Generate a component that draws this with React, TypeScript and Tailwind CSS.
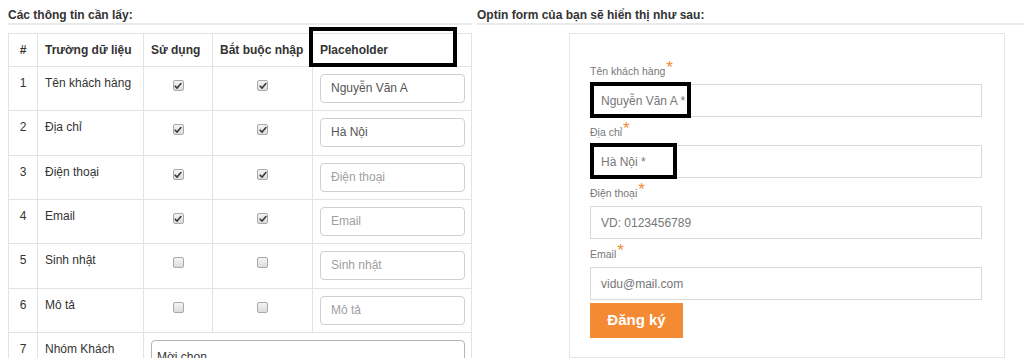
import type { ReactNode } from 'react'

type Field = {
  no: number
  name: string
  used: boolean
  required: boolean
  value?: string
  placeholder: string
  rowH: string
}

const fields: Field[] = [
  { no: 1, name: 'Tên khách hàng', used: true, required: true, value: 'Nguyễn Văn A', placeholder: '', rowH: 'h-[44px]' },
  { no: 2, name: 'Địa chỉ', used: true, required: true, value: 'Hà Nội', placeholder: '', rowH: 'h-[45px]' },
  { no: 3, name: 'Điện thoại', used: true, required: true, placeholder: 'Điện thoại', rowH: 'h-[44px]' },
  { no: 4, name: 'Email', used: true, required: true, placeholder: 'Email', rowH: 'h-[44px]' },
  { no: 5, name: 'Sinh nhật', used: false, required: false, placeholder: 'Sinh nhật', rowH: 'h-[45px]' },
  { no: 6, name: 'Mô tả', used: false, required: false, placeholder: 'Mô tả', rowH: 'h-[44px]' },
]

function Check({ on }: { on: boolean }) {
  return (
    <span className="mt-[5px] flex h-[11px] w-[11px] items-center justify-center rounded-[2px] border border-[#a9a9a9] bg-gradient-to-b from-[#f4f4f4] to-[#dcdcdc]">
      {on && (
        <svg width="8" height="8" viewBox="0 0 8 8">
          <path d="M1.2 4.2 L3.1 6.1 L6.9 1.6" fill="none" stroke="#3a3a3a" strokeWidth="1.6" strokeLinecap="round" strokeLinejoin="round" />
        </svg>
      )}
    </span>
  )
}

function Cell({ w, children, className = '' }: { w: string; children?: ReactNode; className?: string }) {
  return <div className={`${w} shrink-0 border-r border-b border-[#e3e3e3] px-[7px] pt-[8px] ${className}`}>{children}</div>
}

function Label({ text }: { text: string }) {
  return (
    <div className="mb-[6px] flex h-[14px] items-center text-[10.5px] leading-[14px] text-[#777]">
      {text}
      <span className="-mt-[8px] ml-[1px] text-[17px] leading-none text-[#f58a34]">*</span>
    </div>
  )
}

function FormInput({ text, boxW }: { text: string; boxW?: string }) {
  return (
    <div className="relative mb-[8px] flex h-[33px] w-[392px] items-center border border-[#d9d9d9] bg-white pl-[10px] text-[12px] text-[#777]">
      {text}
      {boxW && <div className={`absolute -left-[1px] -top-[3px] h-[36px] ${boxW} border-[4px] border-black`} />}
    </div>
  )
}

export default function App() {
  return (
    <div className="flex h-[358px] w-[1024px] overflow-hidden bg-white pt-[7px] font-['Liberation_Sans',Arial,sans-serif] text-[#333]">
      <div className="ml-[8px] w-[464px] shrink-0">
        <div className="h-[18px] border-b-2 border-[#eaeaea] text-[12px] font-bold leading-[16px] text-[#333]">
          Các thông tin cần lấy:
        </div>
        <div className="mt-[8px] border-l border-t border-[#e3e3e3] text-[12px] leading-[17px]">
          <div className="flex h-[33px] font-bold">
            <Cell w="w-[29px]" className="text-center">#</Cell>
            <Cell w="w-[106px]">Trường dữ liệu</Cell>
            <Cell w="w-[69px]">Sử dụng</Cell>
            <Cell w="w-[100px]">Bắt buộc nhập</Cell>
            <Cell w="w-[159px]" className="relative">
              Placeholder
              <div className="absolute -left-[4px] -top-[7px] h-[40px] w-[148px] border-[4px] border-black" />
            </Cell>
          </div>
          {fields.map(f => (
            <div key={f.no} className={`flex ${f.rowH}`}>
              <Cell w="w-[29px]" className="text-center">{f.no}</Cell>
              <Cell w="w-[106px]">{f.name}</Cell>
              <Cell w="w-[69px]" className="flex justify-center"><Check on={f.used} /></Cell>
              <Cell w="w-[100px]" className="flex justify-center"><Check on={f.required} /></Cell>
              <Cell w="w-[159px]" className="!pt-[7px]">
                <div className={`flex h-[29px] w-[145px] items-center rounded-[4px] border border-[#d0d0d0] pl-[10px] ${f.value ? 'text-[#555]' : 'text-[#a0a0a0]'}`}>
                  {f.value ?? f.placeholder}
                </div>
              </Cell>
            </div>
          ))}
          <div className="flex h-[60px]">
            <Cell w="w-[29px]" className="text-center">7</Cell>
            <Cell w="w-[106px]">Nhóm Khách hàng</Cell>
            <Cell w="w-[328px]" className="!pt-[7px]">
              <div className="flex h-[34px] w-[314px] items-center rounded-[4px] border border-[#b5b5b5] pl-[5px] text-[#333]">
                Mời chọn
              </div>
            </Cell>
          </div>
        </div>
      </div>

      <div className="ml-[5px] flex-1">
        <div className="h-[18px] border-b-2 border-[#eaeaea] text-[12px] font-bold leading-[16px] text-[#333]">
          Optin form của bạn sẽ hiển thị như sau:
        </div>
        <div className="ml-[92px] mt-[8px] w-[436px] border border-[#e6e6e6] pb-[19px] pl-[20px] pt-[30px]">
          <Label text="Tên khách hàng" />
          <FormInput text="Nguyễn Văn A *" boxW="w-[101px]" />
          <Label text="Địa chỉ" />
          <FormInput text="Hà Nội *" boxW="w-[87px]" />
          <Label text="Điện thoại" />
          <FormInput text="VD: 0123456789" />
          <Label text="Email" />
          <div className="-mb-[5px]">
            <FormInput text="vidu@mail.com" />
          </div>
          <button className="h-[35px] w-[93px] bg-[#f58a34] text-[15px] font-bold text-white">Đăng ký</button>
        </div>
      </div>
    </div>
  )
}
